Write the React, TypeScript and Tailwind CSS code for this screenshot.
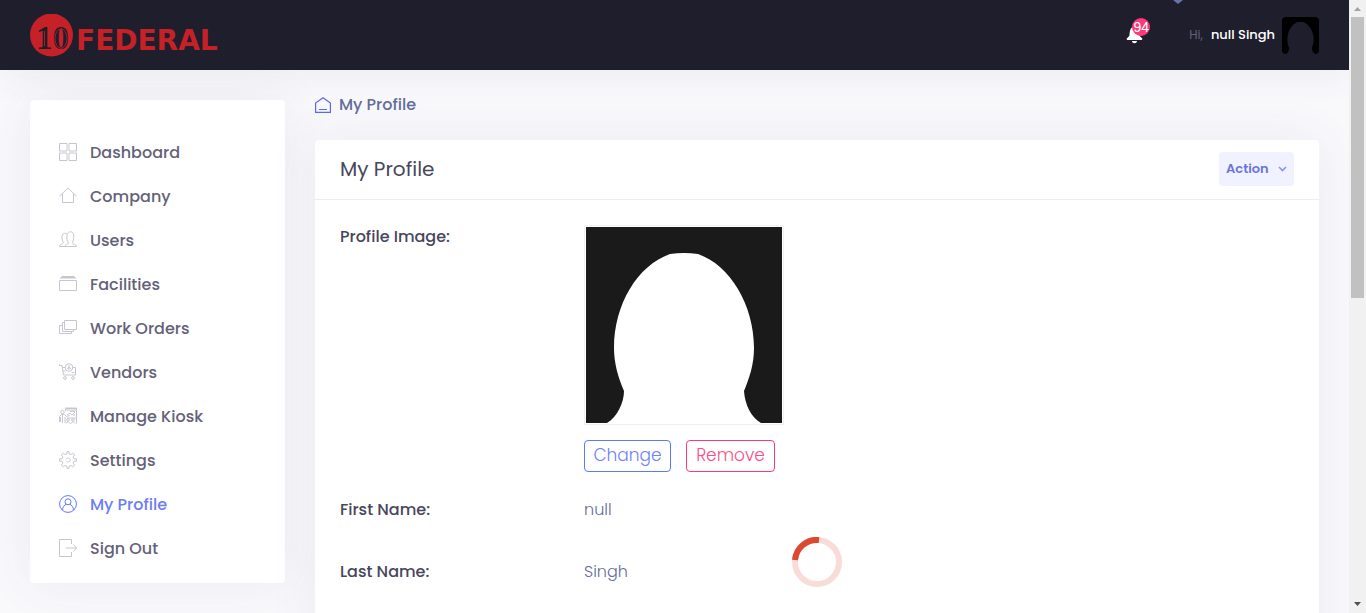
import React from 'react';

const silhouette =
  'M21 196C31 190 38 176 38 164C32 150 28 136 28 121C28 77 52 38 84 27Q98 25 112 27C144 38 168 78 168 121C168 138 163 152 158 164C159 178 165 190 175 196Z';

function Icon({ children }: { children: React.ReactNode }) {
  return (
    <svg viewBox="0 0 18 18" className="size-[18px] shrink-0" fill="none" stroke="currentColor" strokeWidth="1" aria-hidden="true">
      {children}
    </svg>
  );
}

const items: { label: string; icon: React.ReactNode; active?: boolean }[] = [
  {
    label: 'Dashboard',
    icon: <path d="M.5.5h7.500v7.500h-7.500zM10 .5h7.500v7.500h-7.500zM.5 10h7.500v7.500h-7.500zM10 10h7.500v7.500h-7.500z" />,
  },
  { label: 'Company', icon: <path d="M.5 9L9 1.200l8.500 7.800M3.500 7v8.500h11V7" /> },
  {
    label: 'Users',
    icon: (
      <>
        <path d="M6 15.500c0-2 3-2 3.500-3.500-1.500-2-2-4-1.500-7C8 1.500 10 .8 11.500.8s3.300 1 3.300 4c0 3-.3 5-1.600 7 .8 1.700 4.300 1.500 4.300 3.700z" />
        <path d="M7.500 2.500C4.500 1.800 3 3 3 5.500c0 3 .5 4.500 1.500 6C4 13.500.5 13 .5 15.500H6" />
      </>
    ),
  },
  {
    label: 'Facilities',
    icon: (
      <>
        <path d="M3 1h12l2.500 2.500H.5z" fill="currentColor" stroke="none" />
        <path d="M.5 5.500h17v10H.5z" />
      </>
    ),
  },
  { label: 'Work Orders', icon: <path d="M5.500 1.500h12v9h-12zM5 3.500H3.500v9h11V11M3 6.500H.5v8h12V13" /> },
  {
    label: 'Vendors',
    icon: (
      <>
        <path d="M.5 1v1.500h2.500l1.500 9.500h12V4.500h-3M3.500 4.500h3M4 8h2.500M12.500 9.500h3" />
        <circle cx="10" cy="4.500" r="3.800" />
        <path d="M10 2v5M8 5.500l2-1 2 1" />
        <circle cx="6" cy="15" r="1.400" />
        <circle cx="14" cy="15" r="1.400" />
      </>
    ),
  },
  {
    label: 'Manage Kiosk',
    icon: (
      <>
        <path d="M6.500 4V1.500h11v15M6.500 1h11v2h-11M8 8l3-2 2 2 3-3M14 8h2M11 4.500h5" />
        <circle cx="3.500" cy="5" r="1.700" />
        <path d="M.5 15V9.500l2-2h3l2 2 3-1M3.500 8v8M1.500 10v5M6 10v6M8 11h9" />
        <circle cx="9" cy="13" r="1.300" />
        <circle cx="14" cy="13" r="1.300" />
        <path d="M7 16.500l2-2 2.500 2 2.500-2 2 2" />
      </>
    ),
  },
  {
    label: 'Settings',
    icon: (
      <>
        <path d="M8 .6h2v2.200l2 .8L13.700 2l2 2-1.500 1.800.8 2h2.400v2.400H15l-.8 2 1.500 1.800-2 2-1.700-1.500-2 .8v2.100H8v-2.100l-2-.8L4.300 16l-2-2 1.500-1.800-.8-2H.6V7.800H3l.8-2L2.300 4l2-2L6 3.600l2-.8z" />
        <path d="M7 8.200c.8-1.800 4.300-1.500 4.200.8 0 2-2.800 2.500-3.700 1.200" />
      </>
    ),
  },
  {
    label: 'My Profile',
    active: true,
    icon: (
      <>
        <circle cx="9" cy="9" r="8.400" />
        <circle cx="9" cy="6.800" r="3" />
        <path d="M3.500 15c.3-3.300 1.800-5 3.700-5.700M14.500 15c-.3-3.300-1.800-5-3.700-5.700" />
      </>
    ),
  },
  { label: 'Sign Out', icon: <path d="M12.500 5V.5H.5v17h12V13M6.500 9h11M14.500 5.500L17.500 9l-3 3.500" /> },
];

function Header() {
  return (
    <header className="relative z-10 flex h-[70px] shrink-0 items-center justify-between bg-[#1e1e2d] px-[30px] shadow-[0_10px_30px_rgba(82,63,105,0.06)]">
      <a href="#home" aria-label="10 Federal" className="flex items-center gap-[3px] text-[#c62127]">
        <svg viewBox="0 0 43 43" className="size-[43px]" aria-hidden="true">
          <circle cx="21.500" cy="21" r="21.500" fill="#c62127" />
          <text x="6" y="35" fontFamily="Liberation Serif, serif" fontSize="33" fontWeight="700" fill="#1e1e2d">10</text>
          <path d="M14.500 17v15" stroke="#c62127" strokeWidth=".8" />
          <ellipse cx="31" cy="24.500" rx="6" ry="9.800" fill="none" stroke="#c62127" strokeWidth=".8" />
        </svg>
        <span className="pt-3 font-['DejaVu_Sans',sans-serif] text-[28px] font-bold leading-8">FEDERAL</span>
      </a>
      <svg viewBox="0 0 10 5" className="absolute right-[166px] top-0 h-[5px] w-[10px]" aria-hidden="true">
        <path d="M0 0h10L5 4z" fill="#6673a8" />
      </svg>
      <div className="flex items-center">
        <button type="button" aria-label="Notifications" className="relative mr-[39px] flex h-8 w-6 items-center">
          <svg viewBox="0 0 18 18" className="size-[18px]" fill="#fff" aria-hidden="true">
            <path d="M8.500 0C5.500 1 4 3 3.700 6.500L3.300 10 1 12.300c-.7.700-.3 1.700.5 1.700h14c.8 0 1.200-1 .5-1.700L13.700 10l-.4-3.500C13 3 11.500 1 8.500 0zM6 15h5c-.3 3-4.700 3-5 0z" />
          </svg>
          <span className="absolute -top-px left-[6px] flex size-[18px] items-center justify-center rounded-full bg-[#fd397a] font-['Liberation_Sans',sans-serif] text-sm leading-4 text-white">94</span>
        </button>
        <button type="button" className="flex items-center">
          <span className="text-xs text-[#636177]">Hi,</span>
          <span className="ml-2 text-[13px] font-medium text-white">null Singh</span>
          <svg viewBox="0 0 196 196" className="ml-[7px] size-[37px] rounded" aria-hidden="true">
            <path fill="#000" d="M0 0h196v196H0z" />
            <path fill="#1e1e2d" d={silhouette} />
          </svg>
        </button>
      </div>
    </header>
  );
}

function Sidebar() {
  return (
    <nav className="w-[255px] shrink-0 rounded bg-white pb-3 pt-[31px] shadow-[0_0_50px_rgba(82,63,105,0.08)]">
      <ul>
        {items.map(({ label, icon, active }) => (
          <li key={label}>
            <a href={'#' + label} className="flex h-11 items-center gap-[13px] px-[29px]">
              <span className={active ? 'pb-[2px] text-[#5d78ff]' : 'pb-[2px] text-[#c6c6d0]'}>
                <Icon>{icon}</Icon>
              </span>
              <span className={active ? 'font-medium text-[#6c7df5]' : 'font-medium text-[#646178]'}>{label}</span>
            </a>
          </li>
        ))}
      </ul>
    </nav>
  );
}

function Field({ label, value }: { label: string; value: string }) {
  return (
    <div className="grid h-[62px] grid-cols-[244px_1fr] text-base leading-6">
      <dt className="font-medium text-[#48465b]">{label}</dt>
      <dd className="font-light text-[#646c9a]">{value}</dd>
    </div>
  );
}

function Profile() {
  return (
    <main className="min-w-0 flex-1">
      <div className="-mt-[7px] mb-[23px] flex h-6 items-center gap-2 text-base font-medium text-[#646c9a]">
        <svg viewBox="0 0 16 16" className="size-4" fill="none" stroke="#5d68e8" strokeWidth="1.200" aria-hidden="true">
          <path d="M.6 15.400V6L8 .8 15.400 6v9.400zM4 12.500h8" />
        </svg>
        My Profile
      </div>
      <section className="h-[800px] rounded bg-white shadow-[0_0_50px_rgba(82,63,105,0.08)]">
        <div className="flex h-[60px] items-center justify-between border-b border-[#ebedf2] px-[25px] pb-[2px]">
          <h1 className="text-xl font-normal text-[#48465b]">My Profile</h1>
          <button type="button" className="flex h-[34px] w-[75px] items-center justify-between rounded-sm bg-[#f0f3ff] px-[7px] text-[13px] font-semibold text-[#6b74dc]">
            Action
            <svg viewBox="0 0 9 6" className="h-[6px] w-[9px]" fill="none" stroke="#8b93ec" strokeWidth="1.600" aria-hidden="true">
              <path d="M1 1l3.500 3.500L8 1" />
            </svg>
          </button>
        </div>
        <dl className="px-[25px] pt-[25px]">
          <div className="grid grid-cols-[244px_1fr] pb-[26px]">
            <dt className="text-base font-medium leading-6 text-[#48465b]">Profile Image:</dt>
            <dd>
              <svg viewBox="0 0 196 196" role="img" aria-label="Profile" className="size-[200px] border border-[#f0f0f0] p-px">
                <path fill="#1a1a1a" d="M0 0h196v196H0z" />
                <path fill="#fff" d={silhouette} />
              </svg>
              <div className="mt-[15px] flex gap-[15px] text-[17px] font-light leading-7">
                <button type="button" className="h-8 w-[87px] rounded-sm border border-[#5d78ff] pb-[2px] text-[#6c83fa]">Change</button>
                <button type="button" className="h-8 w-[89px] rounded-sm border border-[#fd397a] pb-[2px] text-[#f75189]">Remove</button>
              </div>
            </dd>
          </div>
          <Field label="First Name:" value="null" />
          <Field label="Last Name:" value="Singh" />
        </dl>
      </section>
    </main>
  );
}

export default function App() {
  return (
    <div className="flex h-screen overflow-hidden font-[Poppins,Inter,sans-serif]">
      <div className="flex min-w-0 flex-1 flex-col overflow-hidden bg-[#f9f9fc]">
        <Header />
        <div className="flex items-start gap-[30px] px-[30px] pt-[30px]">
          <Sidebar />
          <Profile />
        </div>
        <div role="status" aria-label="Loading" className="pointer-events-none fixed inset-x-0 bottom-[26px] flex justify-center pl-[268px]">
          <svg viewBox="0 0 50 50" className="size-[50px]" fill="none" strokeWidth="6">
            <circle cx="25" cy="25" r="22" stroke="#f8dcd8" />
            <path d="M3 23A22 22 0 0 1 27 3" stroke="#dc4830" />
          </svg>
        </div>
      </div>
      <div aria-hidden="true" className="flex w-[17px] shrink-0 flex-col items-center bg-[#f1f1f1]">
        <svg viewBox="0 0 17 17" className="size-[17px] shrink-0">
          <path d="M5 11h7L8.500 7z" fill="#a3a3a3" />
        </svg>
        <div className="h-[281px] w-[13px] bg-[#c1c1c1]" />
        <svg viewBox="0 0 17 17" className="mt-auto size-[17px] shrink-0">
          <path d="M5 6h7l-3.500 4z" fill="#505050" />
        </svg>
      </div>
    </div>
  );
}
